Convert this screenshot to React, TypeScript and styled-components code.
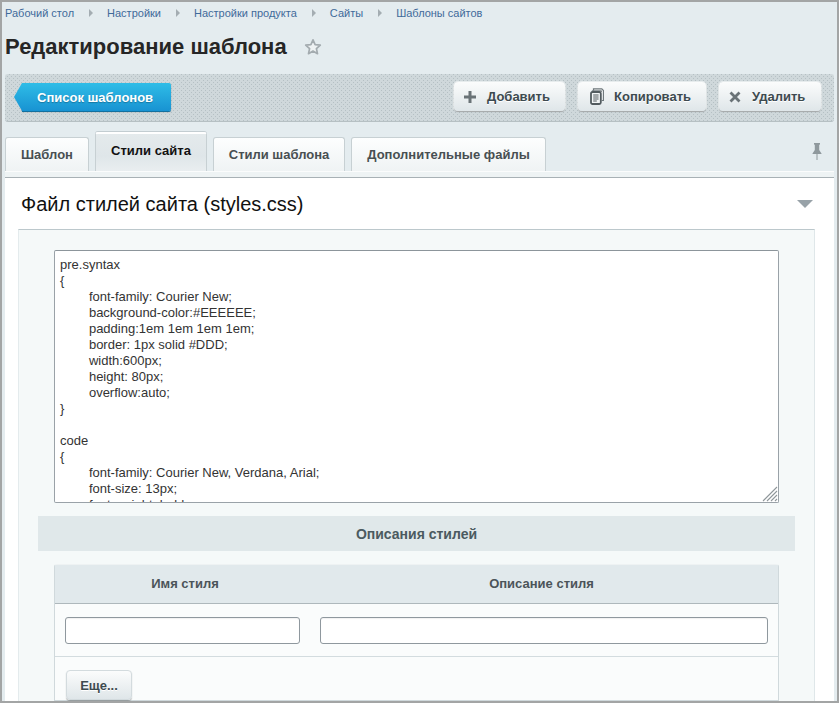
import React from "react";
import styled, { createGlobalStyle } from "styled-components";

const Global = createGlobalStyle`
  html, body { margin: 0; padding: 0; background: #fff; }
  body { font-family: "Liberation Sans", Arial, sans-serif; overflow: hidden; }
  * { box-sizing: border-box; }
`;

const Frame = styled.div`
  width: 839px; height: 703px; overflow: hidden;
  border: 2px solid #a3a5a5;
  padding: 0 3px 0 3px;
  background: #e4ecef;
`;

const Crumbs = styled.nav`
  display: flex; align-items: center; height: 21px;
  font-size: 11px; color: #3f6a9a;
`;
const Crumb = styled.span``;
const Arrow = styled.i`
  width: 0; height: 0; margin: 0 14px 0 15px;
  border-left: 4px solid #a4adb2; border-top: 4px solid transparent; border-bottom: 4px solid transparent;
`;

const TitleRow = styled.div`
  display: flex; align-items: center; height: 49px; gap: 17px; padding-bottom: 2px;
`;
const Title = styled.h1`
  margin: 0; font-size: 22px; font-weight: 700; color: #262626; line-height: 26px;
`;

const Toolbar = styled.div`
  display: flex; align-items: center; justify-content: space-between;
  height: 48px; margin-top: 2px; padding: 0 13px 2px 9px; border-radius: 3px;
  background-color: #cfd8db;
  background-image:
    radial-gradient(circle at 0.5px 0.5px, #b5c0c4 0.7px, transparent 0.8px),
    radial-gradient(circle at 2.5px 2.5px, #b5c0c4 0.7px, transparent 0.8px);
  background-size: 4px 4px;
  border-bottom: 1px solid #b6c0c3;
`;
const BackButton = styled.button`
  position: relative; height: 28px; width: 149px; margin: 1px 0 0 8px; padding: 0 0 0 15px; border: 0;
  border-radius: 0 2px 2px 0;
  background: linear-gradient(#2fbde7, #1893d2);
  box-shadow: 0 1px 0 #13709f, 0 1px 2px rgba(0,0,0,.2);
  color: #fff; font: 700 13px "Liberation Sans", Arial, sans-serif; text-align: left; text-shadow: 0 1px 1px rgba(0,0,0,.25);
  &::before {
    content: ""; position: absolute; left: -8px; top: 0; width: 8px; height: 28px;
    background: linear-gradient(#2fbde7, #1893d2);
    clip-path: polygon(100% 0, 0 50%, 100% 100%);
  }
`;
const Actions = styled.div`
  display: flex; gap: 13px;
`;
const ActionButton = styled.button`
  display: flex; align-items: center; gap: ${p => p.$gap}px; height: 29px; padding: 0 0 0 ${p => p.$pad}px; border: 0;
  width: ${p => p.$w}px; border-radius: 4px;
  background: linear-gradient(#fbfcfc, #dfe6e9);
  box-shadow: 0 1px 1px rgba(0,0,0,.3), 0 0 0 1px rgba(255,255,255,.5);
  color: #3d4a4f; font: 700 13px "Liberation Sans", Arial, sans-serif; text-shadow: 0 1px 0 #fff;
`;

const TabRow = styled.div`
  display: flex; align-items: flex-end; gap: 6px; height: 49px; position: relative;
`;
const Tab = styled.div`
  display: flex; align-items: center; justify-content: center;
  width: ${p => p.$w}px; height: ${p => (p.$active ? 39 : 34)}px;
  border: 1px solid #c7d0d3; border-bottom: 0; border-radius: 3px 3px 0 0;
  font-size: 13px; font-weight: 700;
  padding-bottom: ${p => (p.$active ? 4 : 0)}px;
  color: ${p => (p.$active ? "#111" : "#484f52")};
  background: ${p => (p.$active ? "linear-gradient(#e4eaec, #dfe6e9 60%, #e9eef0)" : "linear-gradient(#fdfefe, #eff3f4)")};
  ${p => p.$active && "border-top: 2px solid #fff; box-shadow: 0 -1px 0 #c3cdd1;"}
`;
const PinHolder = styled.span`
  position: absolute; right: 12px; bottom: 11px; display: flex;
`;

const Band = styled.div`
  height: 6px; background: #eef3f4; border-top: 1px solid #fbfcfc;
`;
const Panel = styled.section`
  background: #fff; border-top: 1px solid #a8b1b5; 
  padding: 0 19px 0 13px; min-height: 600px;
`;
const PanelHead = styled.div`
  display: flex; align-items: center; justify-content: space-between; height: 51px;
  padding: 0 2px 0 3px;
`;
const PanelTitle = styled.h2`
  margin: 2px 0 0; font-size: 20px; font-weight: 400; color: #111;
`;
const Caret = styled.i`
  width: 0; height: 0; margin-top: 1px;
  border-top: 8px solid #98a2a8; border-left: 8px solid transparent; border-right: 8px solid transparent;
`;
const Inner = styled.div`
  background: #f5f9f9; border-top: 1px solid #bcc8cc; border-right: 1px solid #dfe7e9; border-left: 1px solid #e4ebed;
  padding: 20px 19px 0 19px; min-height: 500px;
`;
const EditorBox = styled.div`
  position: relative; width: 725px; height: 253px; margin-left: 16px;
`;
const Editor = styled.textarea`
  display: block; width: 100%; height: 100%; margin: 0; padding: 6px 5px;
  border: 1px solid #9aa2a8; border-top-color: #8c959b; border-radius: 2px;
  background: #fff; color: #333; font: 13px/16px "Liberation Sans", Arial, sans-serif;
  white-space: pre; overflow: hidden; resize: none; outline: none; tab-size: 8;
`;
const Grip = styled.svg`
  position: absolute; right: 1px; bottom: 1px;
`;
const SectionHead = styled.div`
  display: flex; align-items: center; justify-content: center;
  height: 35px; margin-top: 13px; background: #e0e8ea;
  font-size: 14px; font-weight: 700; color: #4b5a60;
`;
const TableBox = styled.div`
  margin: 13px 0 0 16px; width: 725px; background: #fafcfc;
  border: 1px solid #d0d9dc; border-top-color: #eef2f3; border-radius: 3px 3px 0 0;
`;
const TableHead = styled.div`
  display: grid; grid-template-columns: 260px 453px; height: 39px; align-items: center; padding-bottom: 2px;
  background: #e1e9ec; border-bottom: 1px solid #aeb8bc; text-align: center;
  font-size: 13px; font-weight: 700; color: #4b5459;
`;
const TableRow = styled.div`
  display: grid; grid-template-columns: 235px 448px; column-gap: 20px; height: 53px; padding: 13px 0 0 10px;
  border-bottom: 1px solid #d3dcdf;
`;
const TextInput = styled.input`
  width: 100%; height: 27px; border: 1px solid #8f989e; border-radius: 3px; background: #fff; outline: none;
  box-shadow: inset 0 1px 1px rgba(0,0,0,.06);
`;
const Footer = styled.div`
  padding: 13px 0 0 11px;
`;
const MoreButton = styled.button`
  width: 66px; height: 30px; border: 1px solid #d3dbde; border-radius: 4px; padding: 0;
  background: linear-gradient(#fbfcfc, #dfe6e9);
  box-shadow: 0 1px 1px rgba(0,0,0,.3);
  color: #3d4a4f; font: 700 13px "Liberation Sans", Arial, sans-serif; text-shadow: 0 1px 0 #fff;
`;

const css = `pre.syntax
{
	font-family: Courier New;
	background-color:#EEEEEE;
	padding:1em 1em 1em 1em;
	border: 1px solid #DDD;
	width:600px;
	height: 80px;
	overflow:auto;
}

code
{
	font-family: Courier New, Verdana, Arial;
	font-size: 13px;
	font-weight: bold;
	color: #333;
}`;

const StarIcon = () => (
  <svg width="18" height="18" viewBox="0 0 18 18"><path d="M9 1.8l2.1 4.8 5.2.5-3.9 3.5 1.1 5.1L9 13.1l-4.5 2.6 1.1-5.1L1.7 7.1l5.2-.5z" fill="#eef2f3" stroke="#a3abaf" strokeWidth="1.7" strokeLinejoin="round"/></svg>
);
const PlusIcon = () => (
  <svg width="12" height="12" viewBox="0 0 12 12"><path d="M4.500 0h3v4.500H12v3H7.500V12h-3V7.500H0v-3h4.500z" fill="#6a7377"/></svg>
);
const CopyIcon = () => (
  <svg width="14" height="17" viewBox="0 0 14 17" fill="none">
    <path d="M3.500 2.800V.8h8.300l1.700 1.700v10h-1.700" stroke="#6f787c" strokeWidth="1.200"/>
    <path d="M2 3.500V2.800h9.500v1" stroke="#6f787c" strokeWidth="1"/>
    <rect x="1" y="4" width="9.800" height="12" rx="1.500" fill="#f2f5f6" stroke="#525b5f" strokeWidth="1.800"/>
    <path d="M3.200 7h5.400M3.200 9h5.400M3.200 11h5.400M3.200 13h3.600" stroke="#525b5f" strokeWidth="1"/>
  </svg>
);
const CrossIcon = () => (
  <svg width="12" height="12" viewBox="0 0 12 12"><path d="M1.500 1.500l9 9M10.500 1.500l-9 9" stroke="#6a7377" strokeWidth="2.800"/></svg>
);
const PinIcon = () => (
  <svg width="10" height="17" viewBox="0 0 10 17"><path d="M2 0h6v1.200L7.200 2v5L9.500 10.500v.5h-9v-.5L2.800 7V2L2 1.200zM4.500 11h1v6h-1z" fill="#8f999d"/></svg>
);

export default function App() {
  return (
    <>
      <Global />
      <Frame>
        <Crumbs>
          <Crumb>Рабочий стол</Crumb><Arrow />
          <Crumb>Настройки</Crumb><Arrow />
          <Crumb>Настройки продукта</Crumb><Arrow />
          <Crumb>Сайты</Crumb><Arrow />
          <Crumb>Шаблоны сайтов</Crumb>
        </Crumbs>
        <TitleRow>
          <Title>Редактирование шаблона</Title>
          <StarIcon />
        </TitleRow>
        <Toolbar>
          <BackButton>Список шаблонов</BackButton>
          <Actions>
            <ActionButton $w={111} $pad={10} $gap={11}><PlusIcon />Добавить</ActionButton>
            <ActionButton $w={128} $pad={12} $gap={10}><CopyIcon />Копировать</ActionButton>
            <ActionButton $w={102} $pad={10} $gap={11}><CrossIcon />Удалить</ActionButton>
          </Actions>
        </Toolbar>
        <TabRow>
          <Tab $w={84}>Шаблон</Tab>
          <Tab $w={112} $active>Стили сайта</Tab>
          <Tab $w={132}>Стили шаблона</Tab>
          <Tab $w={195}>Дополнительные файлы</Tab>
          <PinHolder><PinIcon /></PinHolder>
        </TabRow>
        <Band />
        <Panel>
          <PanelHead>
            <PanelTitle>Файл стилей сайта (styles.css)</PanelTitle>
            <Caret />
          </PanelHead>
          <Inner>
            <EditorBox>
              <Editor readOnly defaultValue={css} spellCheck={false} />
              <Grip width="16" height="16" viewBox="0 0 16 16" fill="none" stroke="#8f979b" strokeWidth="1.100">
                <path d="M1 15L15 1M5 15L15 5M9 15l6-6M13 15l2-2" />
              </Grip>
            </EditorBox>
            <SectionHead>Описания стилей</SectionHead>
            <TableBox>
              <TableHead><span>Имя стиля</span><span>Описание стиля</span></TableHead>
              <TableRow><TextInput /><TextInput /></TableRow>
              <Footer><MoreButton>Еще...</MoreButton></Footer>
            </TableBox>
          </Inner>
        </Panel>
      </Frame>
    </>
  );
}
